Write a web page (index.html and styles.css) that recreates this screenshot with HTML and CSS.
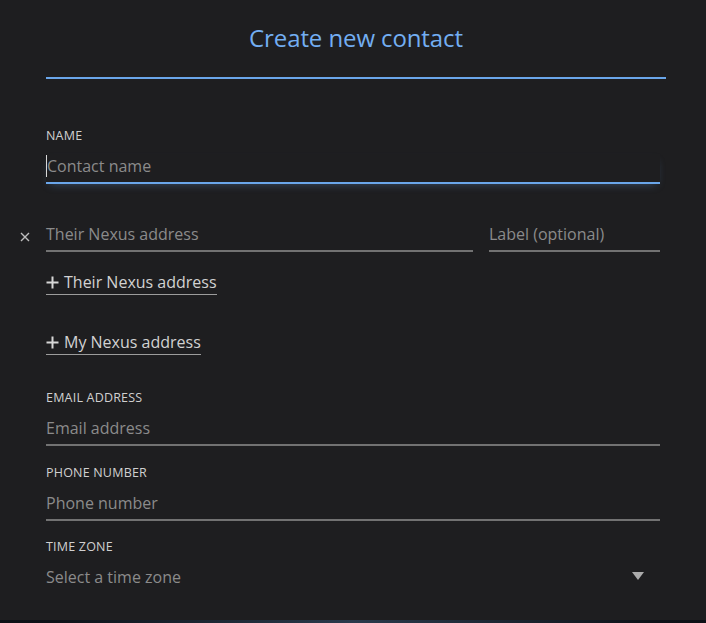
FILE: index.html
```html
<!DOCTYPE html>
<html lang="en">
<head>
<meta charset="utf-8">
<title>Create new contact</title>
<link rel="stylesheet" href="styles.css">
</head>
<body>
<div class="modal">
  <header class="header">
    <h1 class="title">Create new contact</h1>
  </header>

  <div class="field field-name">
    <div class="label">Name</div>
    <div class="input focused"><span class="caret"></span><span class="ph">Contact name</span></div>
  </div>

  <div class="addr-row">
    <button class="remove" type="button" aria-label="Remove">
      <svg width="10" height="10" viewBox="0 0 10 10"><path d="M1 1L9 9M9 1L1 9" stroke="#bdbdbd" stroke-width="1.4" fill="none"/></svg>
    </button>
    <div class="input grow"><span class="ph">Their Nexus address</span></div>
    <div class="input side"><span class="ph">Label (optional)</span></div>
  </div>

  <button class="add add-their" type="button">
    <svg width="13" height="13" viewBox="0 0 13 13"><path d="M6.5 0.5V12.5M0.5 6.5H12.5" stroke="#d6d6d6" stroke-width="2" fill="none"/></svg>
    <span>Their Nexus address</span>
  </button>

  <button class="add add-my" type="button">
    <svg width="13" height="13" viewBox="0 0 13 13"><path d="M6.5 0.5V12.5M0.5 6.5H12.5" stroke="#d6d6d6" stroke-width="2" fill="none"/></svg>
    <span>My Nexus address</span>
  </button>

  <div class="field field-email">
    <div class="label">Email address</div>
    <div class="input"><span class="ph">Email address</span></div>
  </div>

  <div class="field field-phone">
    <div class="label">Phone number</div>
    <div class="input"><span class="ph">Phone number</span></div>
  </div>

  <div class="field field-tz">
    <div class="label">Time zone</div>
    <div class="select"><span class="ph">Select a time zone</span><span class="arrow"></span></div>
  </div>
</div>
</body>
</html>
```

FILE: styles.css
```css
html, body {
  margin: 0;
  padding: 0;
}
body {
  width: 706px;
  height: 623px;
  overflow: hidden;
  background: radial-gradient(ellipse at 50% 100%, #2a3a4c 0%, #0d1218 60%, #0a0d12 100%);
  font-family: "Open Sans", "Noto Sans", sans-serif;
}
.modal {
  height: 620px;
  background: #1e1e20;
  box-sizing: border-box;
  padding: 0 46px;
  overflow: hidden;
}
.header {
  margin-right: -6px;
  padding: 22px 0 23px;
  border-bottom: 2px solid #6aa6ea;
}
.title {
  margin: 0;
  font-weight: 400;
  font-size: 24px;
  line-height: 32px;
  text-align: center;
  color: #73aef2;
  letter-spacing: -0.1px;
}
.label {
  font-size: 12.5px;
  font-weight: 500;
  line-height: 16px;
  letter-spacing: 0.2px;
  text-transform: uppercase;
  color: #d0d0d0;
}
.input, .select {
  font-size: 16px;
  line-height: 24px;
  padding: 0 0 4px;
  color: #8b8b8b;
  white-space: nowrap;
}
.input {
  border-bottom: 2px solid #727272;
}
.input.focused {
  border-bottom-color: #6aa6ea;
  box-shadow: 0 4px 10px -4px rgba(106, 166, 234, 0.35);
  position: relative;
}
.caret {
  display: inline-block;
  width: 1px;
  height: 22px;
  background: #d8d8d8;
  vertical-align: -5px;
}
.field .input, .field .select {
  margin-top: 10px;
}
.field-name { margin-top: 49px; }
.field-email { margin-top: 35px; }
.field-phone { margin-top: 19px; }
.field-tz { margin-top: 18px; }

.addr-row {
  display: flex;
  align-items: flex-start;
  margin: 38px 0 0 -24px;
}
.remove {
  width: 24px;
  height: 24px;
  padding: 0;
  border: 0;
  background: none;
  display: flex;
  align-items: center;
  justify-content: flex-start;
  margin-top: 3px;
}
.remove svg { margin-left: -2px; }
.addr-row .grow {
  flex: 1;
}
.addr-row .side {
  width: 171px;
  margin-left: 16px;
}

.add {
  display: flex;
  align-items: center;
  gap: 5px;
  padding: 0 0 2px;
  border: 0;
  border-bottom: 1px solid #9c9c9c;
  background: none;
  font-family: "Open Sans", "Noto Sans", sans-serif;
  font-size: 16px;
  line-height: 20px;
  color: #d2d2d2;
  cursor: pointer;
}
.add svg { margin-top: 1px; }
.add-their { margin-top: 20px; }
.add-my { margin-top: 37px; }

.select {
  display: flex;
  justify-content: space-between;
  align-items: center;
  padding-right: 16px;
}
.arrow {
  width: 0;
  height: 0;
  border-left: 6px solid transparent;
  border-right: 6px solid transparent;
  border-top: 8px solid #ababab;
  margin-top: -3px;
}
```
